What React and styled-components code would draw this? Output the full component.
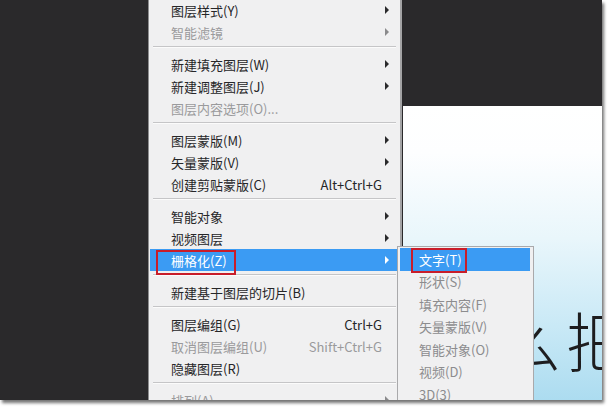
import React from 'react'
import styled, { createGlobalStyle } from 'styled-components'

const GlobalStyles = createGlobalStyle`
  html, body { margin: 0; padding: 0; background: #fff; }
  body { width: 611px; height: 411px; overflow: hidden; }
`

const Frame = styled.div`
  position: relative;
  width: 602px;
  height: 400px;
  background: #2a292b;
  box-shadow: 2px 3px 3px rgba(0, 0, 0, 0.55);
  overflow: hidden;
  font-family: "Noto Sans CJK SC", "Noto Sans", sans-serif;
  display: flex;
  justify-content: flex-end;
  align-items: flex-end;
`

const Canvas = styled.div`
  width: 199px;
  height: 294px;
  background: linear-gradient(#ffffff 0%, #fdfeff 16%, #e9f6fb 45%, #c9e9f6 75%, #acdcf0 100%);
  display: flex;
  align-items: flex-start;
  padding: 200px 0 0 94px;
  box-sizing: border-box;
  overflow: hidden;
`

const BigText = styled.div`
  font-size: 64px;
  font-weight: 300;
  line-height: 1;
  color: #1d1d1f;
  white-space: nowrap;
  letter-spacing: 5px;
`

const Menu = styled.div`
  position: absolute;
  left: 148px;
  top: -1px;
  width: 254px;
  height: 420px;
  box-sizing: border-box;
  background: #f0f0f1;
  border-left: 1px solid #8d8d8f;
  border-right: 2px solid #a3a3a5;
  padding: 0 1px;
`

const Item = styled.div`
  position: relative;
  height: 22px;
  display: flex;
  align-items: center;
  padding: 0 17px 0 21px;
  font-size: 13px;
  color: ${(p) => (p.$active ? '#fff' : p.$disabled ? '#9a9a9c' : '#262628')};
  background: ${(p) => (p.$active ? '#3b9bf3' : 'transparent')};
  white-space: nowrap;
`

const Label = styled.span`
  flex: 1;
`

const Shortcut = styled.span`
  font-size: 13px;
`

const Arrow = styled.span`
  position: absolute;
  right: 10px;
  top: 7px;
  width: 0;
  height: 0;
  border-top: 4px solid transparent;
  border-bottom: 4px solid transparent;
  border-left: 4px solid ${(p) => (p.$active ? '#fff' : p.$disabled ? '#8a8a8c' : '#2a2a2c')};
`

const Separator = styled.div`
  height: 10px;
  display: flex;
  align-items: flex-start;
  padding: 3px 3px 0;
  box-sizing: border-box;
  &::after {
    content: '';
    flex: 1;
    height: 1px;
    background: #c5c5c7;
    box-shadow: 0 1px 0 #fbfbfb;
  }
`

const RedBox = styled.span`
  position: absolute;
  left: ${(p) => p.$left}px;
  top: ${(p) => p.$top}px;
  width: ${(p) => p.$width}px;
  height: 25px;
  box-sizing: border-box;
  border: 2px solid #c81d2a;
  pointer-events: none;
  z-index: 2;
`

const SubMenu = styled.div`
  position: absolute;
  left: 397px;
  top: 246px;
  width: 137px;
  height: 170px;
  box-sizing: border-box;
  background: #f0f0f1;
  border: 1px solid #a9a9ab;
  padding: 1px 3px 0 2px;
`

const SubItem = styled.div`
  position: relative;
  height: 22.5px;
  display: flex;
  align-items: center;
  padding-left: 19px;
  font-size: 13px;
  color: ${(p) => (p.$active ? '#fff' : '#8c8c8e')};
  background: ${(p) => (p.$active ? '#3b9bf3' : 'transparent')};
  white-space: nowrap;
`

const menu = [
  { t: '图层样式(Y)', arrow: true },
  { t: '智能滤镜', arrow: true, disabled: true },
  'sep',
  { t: '新建填充图层(W)', arrow: true },
  { t: '新建调整图层(J)', arrow: true },
  { t: '图层内容选项(O)...', disabled: true },
  'sep',
  { t: '图层蒙版(M)', arrow: true },
  { t: '矢量蒙版(V)', arrow: true },
  { t: '创建剪贴蒙版(C)', key: 'Alt+Ctrl+G' },
  'sep',
  { t: '智能对象', arrow: true },
  { t: '视频图层', arrow: true },
  { t: '栅格化(Z)', arrow: true, active: true, box: true },
  'sep',
  { t: '新建基于图层的切片(B)' },
  'sep',
  { t: '图层编组(G)', key: 'Ctrl+G' },
  { t: '取消图层编组(U)', key: 'Shift+Ctrl+G', disabled: true },
  { t: '隐藏图层(R)' },
  'sep',
  { t: '排列(A)', arrow: true, disabled: true },
]

const sub = ['文字(T)', '形状(S)', '填充内容(F)', '矢量蒙版(V)', '智能对象(O)', '视频(D)', '3D(3)']

export default function App() {
  return (
    <>
      <GlobalStyles />
      <Frame>
        <Canvas>
          <BigText>么把</BigText>
        </Canvas>
        <Menu>
          {menu.map((m, i) =>
            m === 'sep' ? (
              <Separator key={i} />
            ) : (
              <Item key={i} $active={m.active} $disabled={m.disabled}>
                <Label>{m.t}</Label>
                {m.box && <RedBox $left={6} $top={1} $width={80} />}
                {m.key && <Shortcut>{m.key}</Shortcut>}
                {m.arrow && <Arrow $active={m.active} $disabled={m.disabled} />}
              </Item>
            )
          )}
        </Menu>
        <SubMenu>
          {sub.map((s, i) => (
            <SubItem key={s} $active={i === 0}>
              <Label>{s}</Label>
              {i === 0 && <RedBox $left={11} $top={0} $width={56} />}
            </SubItem>
          ))}
        </SubMenu>
      </Frame>
    </>
  )
}
